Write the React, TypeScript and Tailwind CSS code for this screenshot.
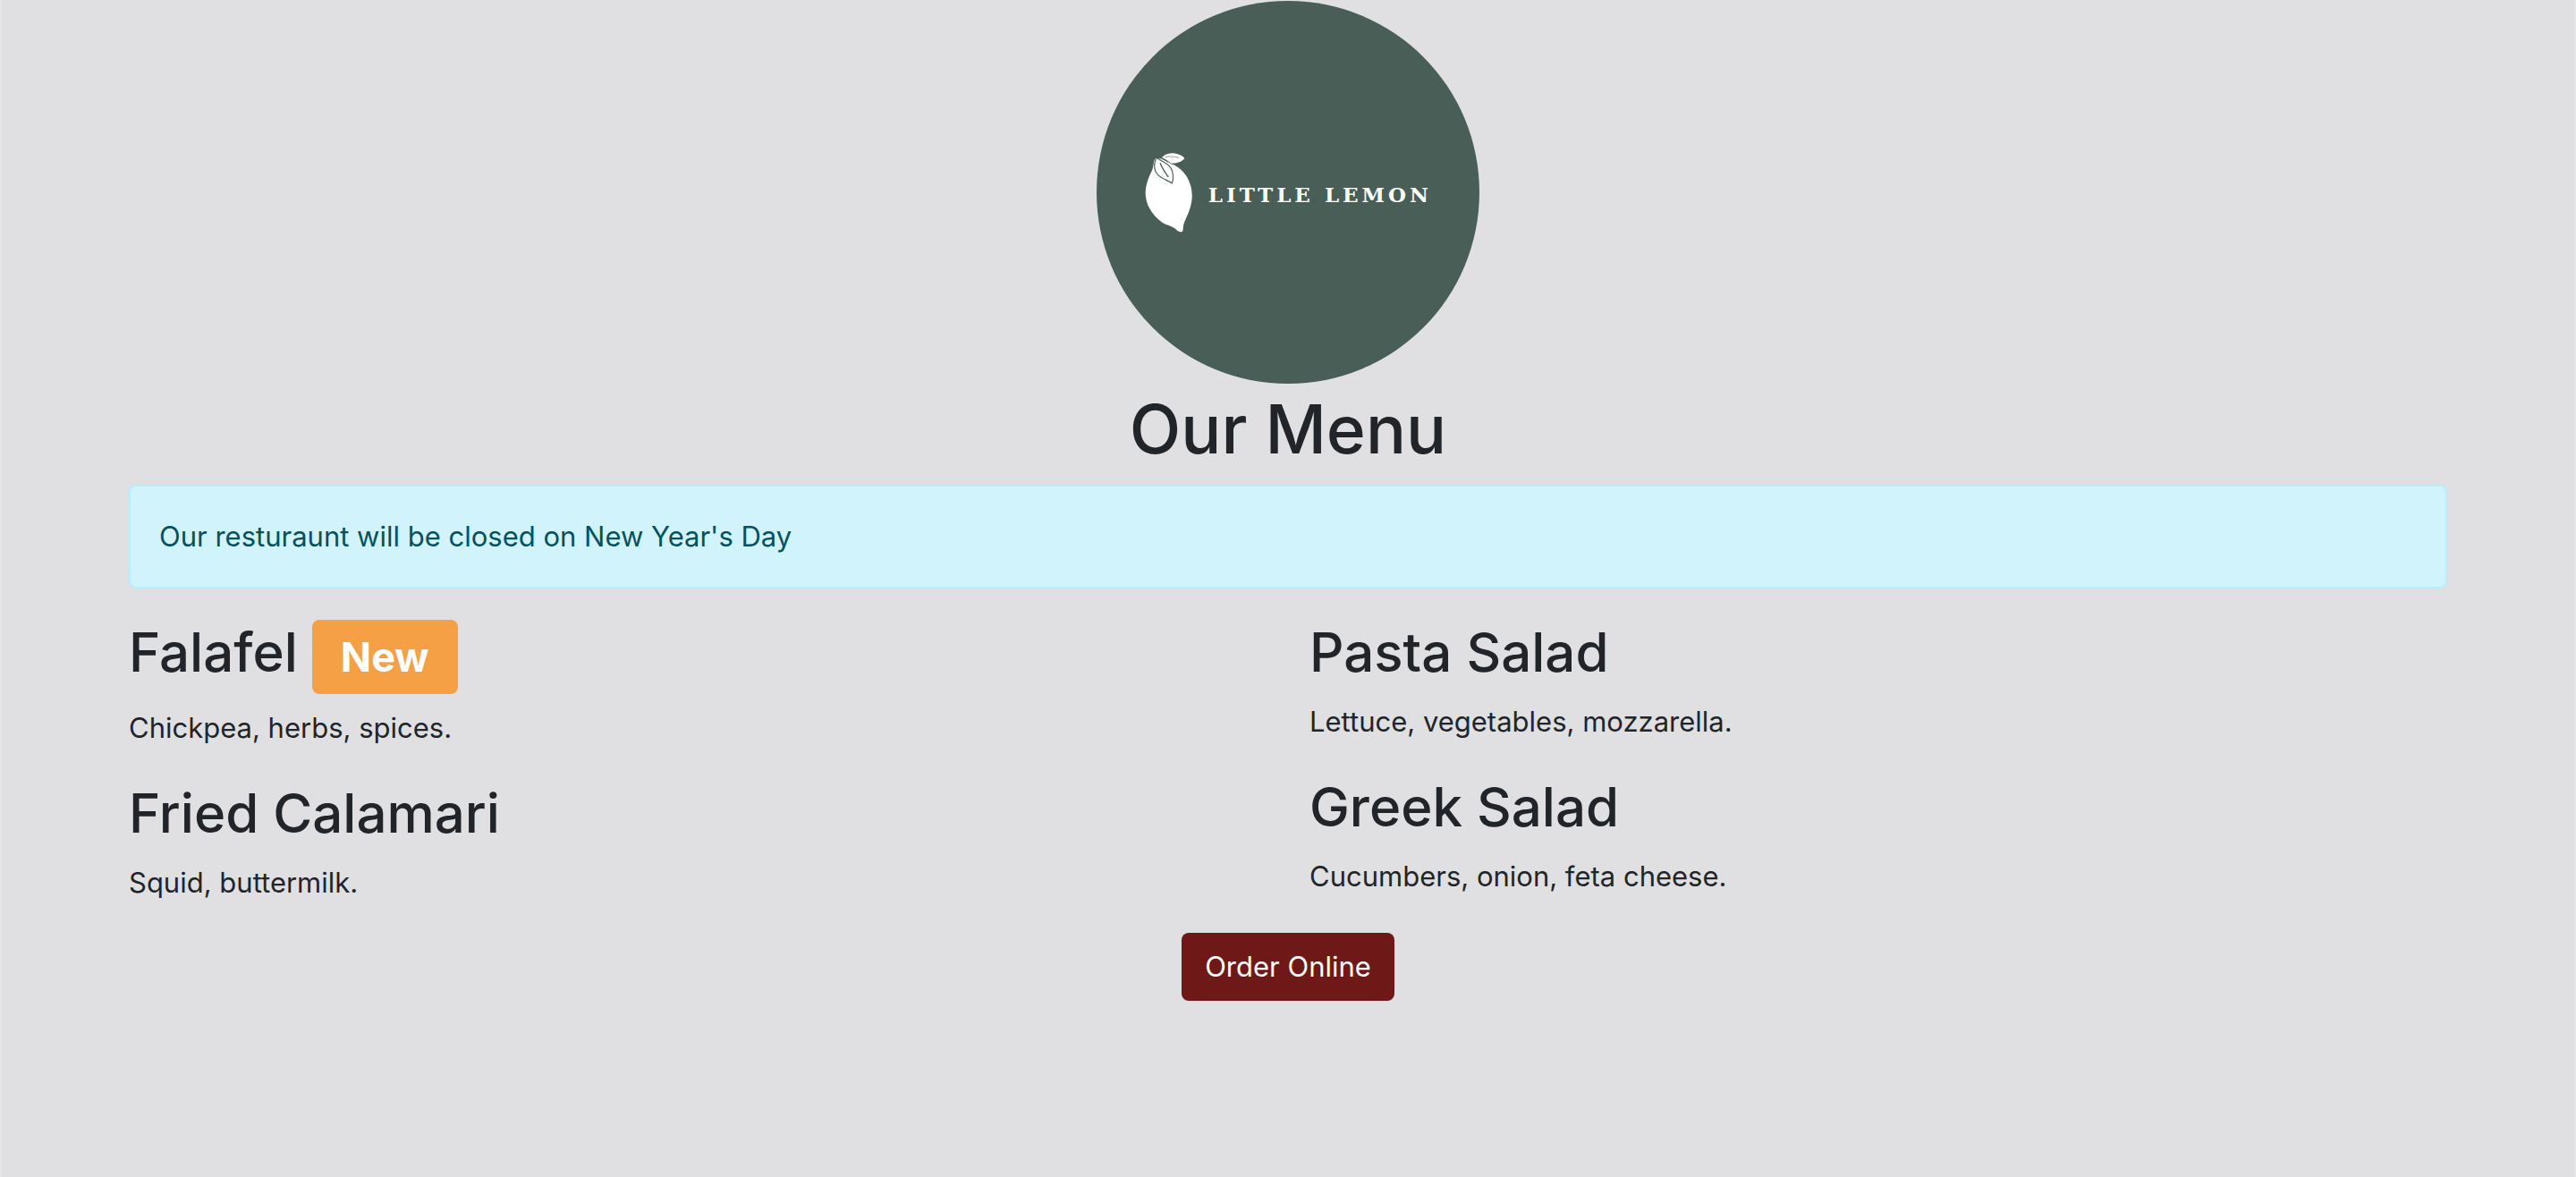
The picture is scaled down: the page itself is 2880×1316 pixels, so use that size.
import type { ReactNode } from "react";

function Lemon() {
  return (
    <svg viewBox="54 60 168 270" className="h-[90px] w-14 shrink-0" aria-hidden="true">
      <path
        fill="#fff"
        d="M91 83C84 94 87 108 80 124C70 144 59 170 59 200C60 236 80 270 116 297C131 306 148 308 157 316C165 324 173 330 181 328C187 325 184 314 187 303C193 283 212 256 215 214C217 174 202 141 178 119C168 110 160 105 150 101L148 97C163 100 181 92 190 81C183 72 166 64 147 64C132 64 121 71 114 79C121 83 133 88 138 97C128 91 113 80 99 81Z"
      />
      <g fill="none" stroke="#495e57" strokeLinecap="round" strokeLinejoin="round">
        <path
          strokeWidth="3.5"
          d="M94 84C85 103 88 124 101 137C115 151 135 154 148 165C154 151 153 128 144 113C134 98 114 90 99 82"
        />
        <path strokeWidth="4" d="M109 98C114 113 125 128 135 143" />
        <path strokeWidth="3" opacity=".6" d="M127 77C140 73 157 75 170 79" />
        <path strokeWidth="3" d="M119 83C132 89 141 96 148 101" />
      </g>
    </svg>
  );
}

function Logo() {
  return (
    <div className="mx-auto flex size-[428px] items-center justify-center gap-4 rounded-full bg-[#495e57]">
      <Lemon />
      <span className="whitespace-nowrap pt-1.5 font-['DejaVu_Serif',serif] text-[23px] font-bold leading-8 tracking-[4px] text-white">
        LITTLE LEMON
      </span>
    </div>
  );
}

function Dish({ name, badge, children }: { name: string; badge?: string; children: ReactNode }) {
  return (
    <article>
      <h2 className="mb-3.5 text-6xl font-medium leading-[79px]">
        {name}
        {badge && (
          <>
            {" "}
            <span className="inline-block rounded-lg bg-[#f6a045] px-8 py-[17px] align-baseline text-[45px] font-bold leading-[49px] text-white">
              {badge}
            </span>
          </>
        )}
      </h2>
      <p className="mb-8 leading-12">{children}</p>
    </article>
  );
}

export default function App() {
  return (
    <div className="min-h-screen border-x-2 border-[#e5e5e7] bg-[#e0e0e2] font-['Inter',sans-serif] text-[31px] text-[#212529]">
      <main className="mx-auto max-w-[2640px] px-6">
        <header className="pt-px">
          <Logo />
          <h1 className="mb-4 pt-1 text-center text-[75px] font-medium leading-[93px]">Our Menu</h1>
        </header>
        <div
          role="alert"
          className="mb-8 rounded-lg border-2 border-[#b6effb] bg-[#d0f3fc] p-8 leading-12 text-[#055160]"
        >
          Our resturaunt will be closed on New Year's Day
        </div>
        <div className="grid grid-cols-2 gap-12">
          <section>
            <Dish name="Falafel" badge="New">Chickpea, herbs, spices.</Dish>
            <Dish name="Fried Calamari">Squid, buttermilk.</Dish>
          </section>
          <section>
            <Dish name="Pasta Salad">Lettuce, vegetables, mozzarella.</Dish>
            <Dish name="Greek Salad">Cucumbers, onion, feta cheese.</Dish>
          </section>
        </div>
        <div className="text-center">
          <button type="button" className="rounded-lg bg-[#6f1818] px-[26px] py-[14px] leading-12 text-white">
            Order Online
          </button>
        </div>
      </main>
    </div>
  );
}
